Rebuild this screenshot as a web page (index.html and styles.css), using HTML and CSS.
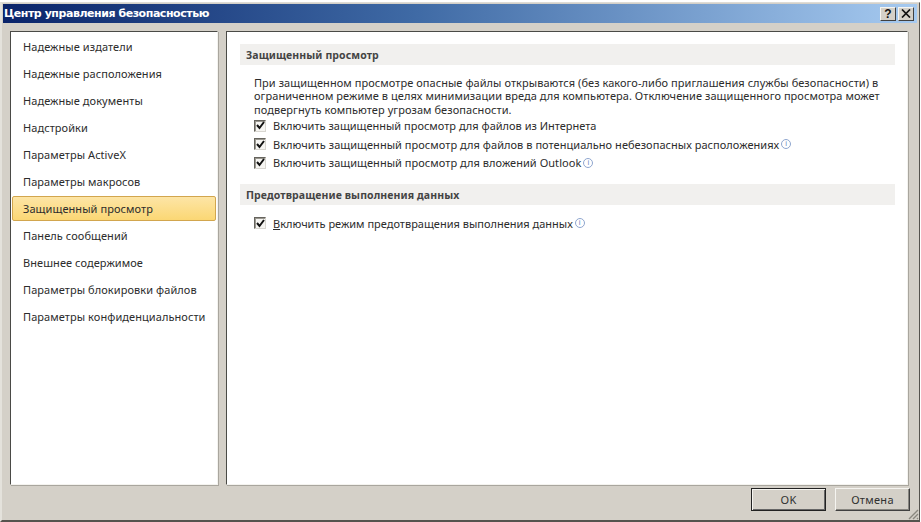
FILE: index.html
```html
<!DOCTYPE html>
<html lang="ru">
<head>
<meta charset="utf-8">
<title>Центр управления безопасностью</title>
<link rel="stylesheet" href="styles.css">
</head>
<body>
<div class="window">
  <header class="titlebar">
    <span class="title">Центр управления безопасностью</span>
    <div class="caption-buttons">
      <span class="caption-btn">?</span>
      <span class="caption-btn"><svg width="10" height="9" viewBox="0 0 10 9"><path d="M1 0.5 L9 8.5 M9 0.5 L1 8.5" stroke="#111" stroke-width="1.7" fill="none"/></svg></span>
    </div>
  </header>
  <main class="content">
    <nav class="sidebar">
      <div class="nav-item">Надежные издатели</div>
      <div class="nav-item">Надежные расположения</div>
      <div class="nav-item">Надежные документы</div>
      <div class="nav-item">Надстройки</div>
      <div class="nav-item">Параметры ActiveX</div>
      <div class="nav-item">Параметры макросов</div>
      <div class="nav-item selected">Защищенный просмотр</div>
      <div class="nav-item">Панель сообщений</div>
      <div class="nav-item">Внешнее содержимое</div>
      <div class="nav-item">Параметры блокировки файлов</div>
      <div class="nav-item">Параметры конфиденциальности</div>
    </nav>
    <section class="panel">
      <h2 class="section-head">Защищенный просмотр</h2>
      <p class="desc">При защищенном просмотре опасные файлы открываются (без какого-либо приглашения службы безопасности) в<br>ограниченном режиме в целях минимизации вреда для компьютера. Отключение защищенного просмотра может<br>подвергнуть компьютер угрозам безопасности.</p>
      <div class="checks">
        <label class="check"><span class="box"><svg width="9" height="9" viewBox="0 0 9 9"><path d="M1 4 L3.5 7 L8 1" stroke="#111" stroke-width="2" fill="none"/></svg></span><span class="tight">Включить защищенный просмотр для файлов из Интернета</span></label>
        <label class="check"><span class="box"><svg width="9" height="9" viewBox="0 0 9 9"><path d="M1 4 L3.5 7 L8 1" stroke="#111" stroke-width="2" fill="none"/></svg></span>Включить защищенный просмотр для файлов в потенциально небезопасных расположениях<span class="info">i</span></label>
        <label class="check"><span class="box"><svg width="9" height="9" viewBox="0 0 9 9"><path d="M1 4 L3.5 7 L8 1" stroke="#111" stroke-width="2" fill="none"/></svg></span>Включить защищенный просмотр для вложений Outlook<span class="info">i</span></label>
      </div>
      <h2 class="section-head second">Предотвращение выполнения данных</h2>
      <div class="checks single">
        <label class="check"><span class="box"><svg width="9" height="9" viewBox="0 0 9 9"><path d="M1 4 L3.5 7 L8 1" stroke="#111" stroke-width="2" fill="none"/></svg></span><span class="tight"><u>В</u>ключить режим предотвращения выполнения данных</span><span class="info">i</span></label>
      </div>
    </section>
  </main>
  <footer class="footer">
    <button class="btn default">OK</button>
    <button class="btn">Отмена</button>
    <svg class="grip" width="12" height="12" viewBox="0 0 12 12"><path d="M11 2 L2 11 M11 6 L6 11 M11 10 L10 11" stroke="#8a887f" stroke-width="1.4" fill="none"/></svg>
  </footer>
</div>
</body>
</html>
```
FILE: styles.css
```css
* { box-sizing: border-box; }
html, body { margin: 0; padding: 0; background: #fff; }
body { font-family: "Noto Sans", "DejaVu Sans", sans-serif; font-size: 11px; color: #2c2c2c; }
.window {
  position: relative;
  width: 920px;
  height: 520px;
  margin-top: 2px;
  background: #d4d0c8;
  border-top: 1px solid #dedcd6;
  border-left: 2px solid #e4e2dc;
  border-right: 1px solid #55534e;
  border-bottom: 2px solid #55534e;
  display: flex;
  flex-direction: column;
}
.titlebar {
  height: 19px;
  margin: 1px 2px 0 1px;
  padding: 0 3px 0 1px;
  background: linear-gradient(90deg, #0a246a 0%, #3f6aa5 45%, #a6caf0 100%);
  display: flex;
  align-items: center;
  justify-content: space-between;
  flex: none;
}
.title { color: #fff; font-weight: 700; font-size: 11px; font-family: "DejaVu Sans", sans-serif; letter-spacing: -0.45px; }
.caption-buttons { display: flex; gap: 2px; }
.caption-btn {
  width: 16px; height: 14px;
  background: #d4d0c8;
  border: 1px solid;
  border-color: #f5f4f0 #404040 #404040 #f5f4f0;
  display: flex; align-items: center; justify-content: center;
  font: 700 12px "Liberation Sans", sans-serif; color: #111;
}
.content { flex: 1; display: flex; gap: 8px; padding: 8px 11px 0 8px; min-height: 0; }
.sidebar, .panel {
  background: #fff;
  border: 1px solid;
  border-color: #4a4a46 #f4f3ef #f4f3ef #4a4a46;
  box-shadow: 1px 1px 0 #a9a69e;
}
.sidebar { width: 208px; padding: 0 1px 1px; flex: none; }
.nav-item {
  height: 27px;
  line-height: 27px;
  padding-left: 10px;
  border: 1px solid transparent;
  letter-spacing: 0.07px;
  white-space: nowrap;
}
.nav-item.selected {
  height: 25px;
  line-height: 23px;
  margin: 2px 0 0;
  border: 1px solid #d2a64e;
  border-radius: 2px;
  background: linear-gradient(#fde5a6, #fbd774);
}
.panel { flex: 1; padding: 12px 12px 0 13px; min-width: 0; }
.section-head {
  margin: 0;
  height: 21px;
  line-height: 22px;
  padding-left: 6px;
  background: #f1f0ee;
  font-size: 10.5px;
  font-weight: 700;
  color: #444;
  letter-spacing: 0.1px;
}
.section-head.second { margin-top: 12px; }
.desc { margin: 10.5px 0 0 14px; line-height: 13.5px; letter-spacing: 0.055px; white-space: nowrap; }
.checks { display: flex; flex-direction: column; margin: 0.5px 0 0 14px; }
.checks.single { margin-top: 9px; }
.check { height: 18.5px; display: flex; align-items: center; letter-spacing: 0.04px; white-space: nowrap; }
.tight { letter-spacing: 0; }
.box {
  width: 12px; height: 12px; margin-right: 7px;
  border: 1px solid #66645e;
  border-right-color: #d8d6d0;
  border-bottom-color: #d8d6d0;
  background: #f6f5f2;
  box-shadow: inset 1px 1px 0 #9a9890;
  display: flex; align-items: center; justify-content: center;
  flex: none;
}
.info {
  width: 10px; height: 10px; margin-left: 2px;
  border: 1px solid #8fa6cf;
  border-radius: 50%;
  font: 8px/8px "Liberation Sans", sans-serif;
  color: #6f8fc4;
  text-align: center;
  flex: none;
}
.footer { flex: none; height: 35px; display: flex; justify-content: flex-end; gap: 9px; padding: 3px 9px 0 0; }
.btn {
  width: 75px; height: 23px;
  background: #d4d0c8;
  font: 11px "Noto Sans", sans-serif;
  letter-spacing: 0.3px;
  color: #303030;
  padding: 0;
  border: 1px solid;
  border-color: #f5f4f0 #404040 #404040 #f5f4f0;
  box-shadow: inset -1px -1px 0 #888680;
}
.btn.default { border: 1px solid #222; box-shadow: inset 1px 1px 0 #f5f4f0, inset -1px -1px 0 #666; }
.grip { position: absolute; right: 0; bottom: 0; }
```
